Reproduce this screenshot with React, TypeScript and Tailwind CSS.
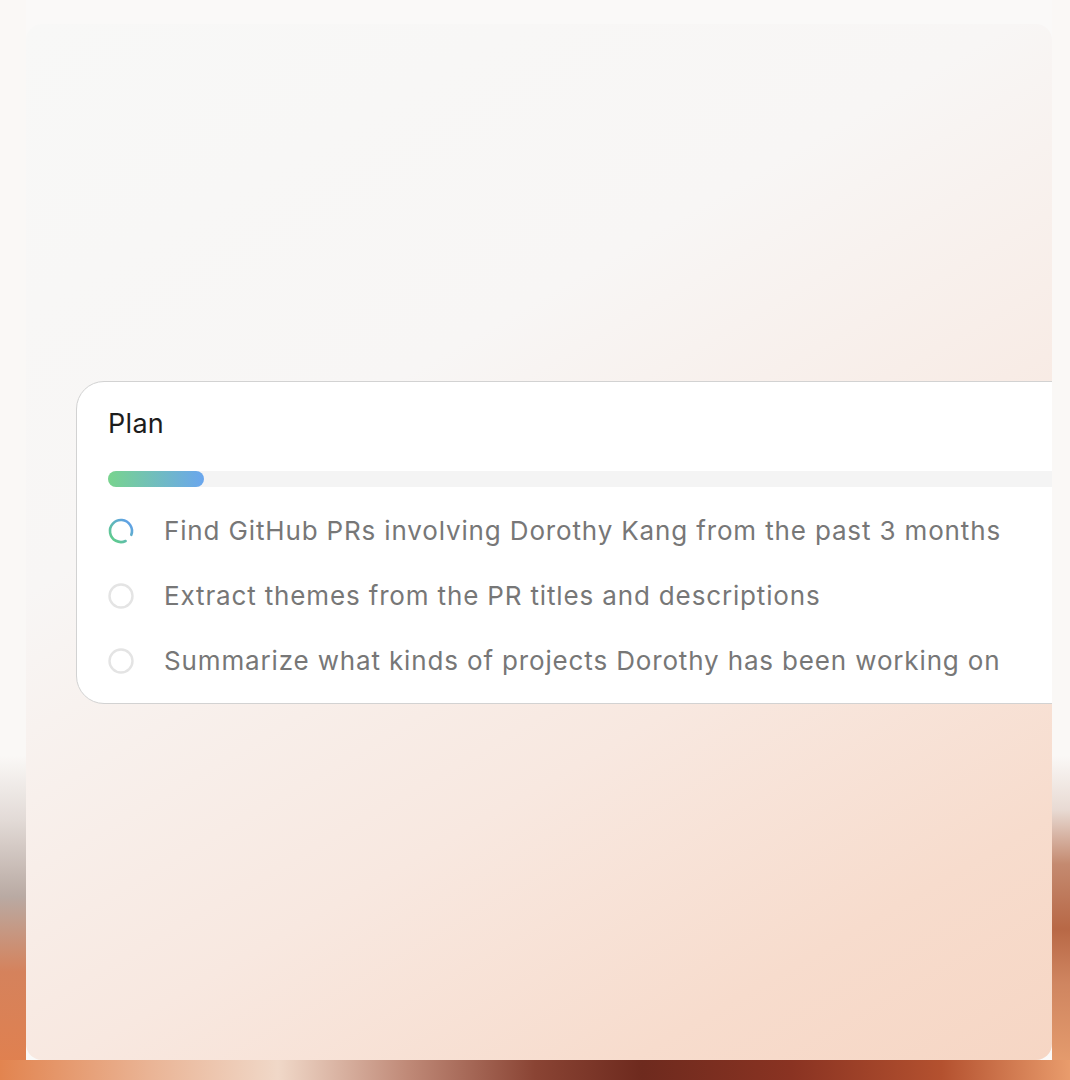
import React from "react";

const steps = [
  { label: "Find GitHub PRs involving Dorothy Kang from the past 3 months", active: true },
  { label: "Extract themes from the PR titles and descriptions", active: false },
  { label: "Summarize what kinds of projects Dorothy has been working on", active: false },
];

const Spinner = () => (
  <svg width="28" height="28" viewBox="0 0 28 28" fill="none">
    <defs>
      <linearGradient id="spin" x1="4" y1="24" x2="24" y2="4" gradientUnits="userSpaceOnUse">
        <stop offset="0" stopColor="#5fcf85" />
        <stop offset="1" stopColor="#5f9cf0" />
      </linearGradient>
    </defs>
    {/* ring with a small gap at the lower right */}
    <path
      d="M18.6 24 A11 11 0 1 1 24.3 17.8"
      stroke="url(#spin)"
      strokeWidth="2.6"
      strokeLinecap="round"
    />
  </svg>
);

const Pending = () => (
  <svg width="28" height="28" viewBox="0 0 28 28" fill="none">
    <circle cx="14" cy="14" r="11.5" stroke="#e4e4e4" strokeWidth="2.4" />
  </svg>
);

const App = () => {
  return (
    <div className="h-[1080px] w-full flex flex-col pt-[24px] pl-[26px] pr-[18px] pb-[20px] [background:linear-gradient(to_right,#e2844f_0%,#eab495_14%,#f0d8c8_26%,#c08a78_38%,#8a4434_50%,#6e2a1e_60%,#8a3322_74%,#b4512f_88%,#e99c6c_100%)_bottom/100%_20px_no-repeat,linear-gradient(to_bottom,#faf8f6_0%,#faf8f6_70%,#e2dad6_76%,#b9aaa3_83%,#d5825c_90%,#e2804d_100%)_left/26px_100%_no-repeat,linear-gradient(to_bottom,#faf8f6_0%,#faf8f6_70%,#e8dad3_75%,#c48a70_80%,#b86846_86%,#cf8560_91%,#e9a070_100%)_right/18px_100%_no-repeat,#faf9f8]">
      <div className="flex-1 overflow-hidden rounded-[16px] flex flex-col pt-[357px] pl-[50px] bg-[linear-gradient(150deg,#f8f8f7_0%,#f8f6f5_35%,#f8e8e0_65%,#f7dccd_85%,#f6d6c4_100%)] font-['Inter','Noto_Sans',sans-serif]">
        <div className="w-[1040px] shrink-0 bg-white border-[1.5px] border-[#d2d2d2] rounded-[28px] pl-[31px] pt-[26px] pb-[10px]">
          <div className="h-8 flex items-center text-[27px] text-[#1c1c1c] tracking-[0.3px]">
            Plan
          </div>
          <div className="mt-[31px] h-4 rounded-full bg-[#f4f4f4]">
            <div className="h-4 w-[96px] rounded-full bg-[linear-gradient(to_right,#78d48e,#6aa6ee)]" />
          </div>
          <div className="mt-[11px] flex flex-col">
            {steps.map((s) => (
              <div key={s.label} className="h-[65px] flex items-center gap-[29px]">
                <div className="w-7 h-7 shrink-0 -ml-[1px]">
                  {s.active ? <Spinner /> : <Pending />}
                </div>
                <span className="text-[26px] text-[#777777] whitespace-nowrap tracking-[0.85px]">
                  {s.label}
                </span>
              </div>
            ))}
          </div>
        </div>
      </div>
    </div>
  );
};

export default App;
